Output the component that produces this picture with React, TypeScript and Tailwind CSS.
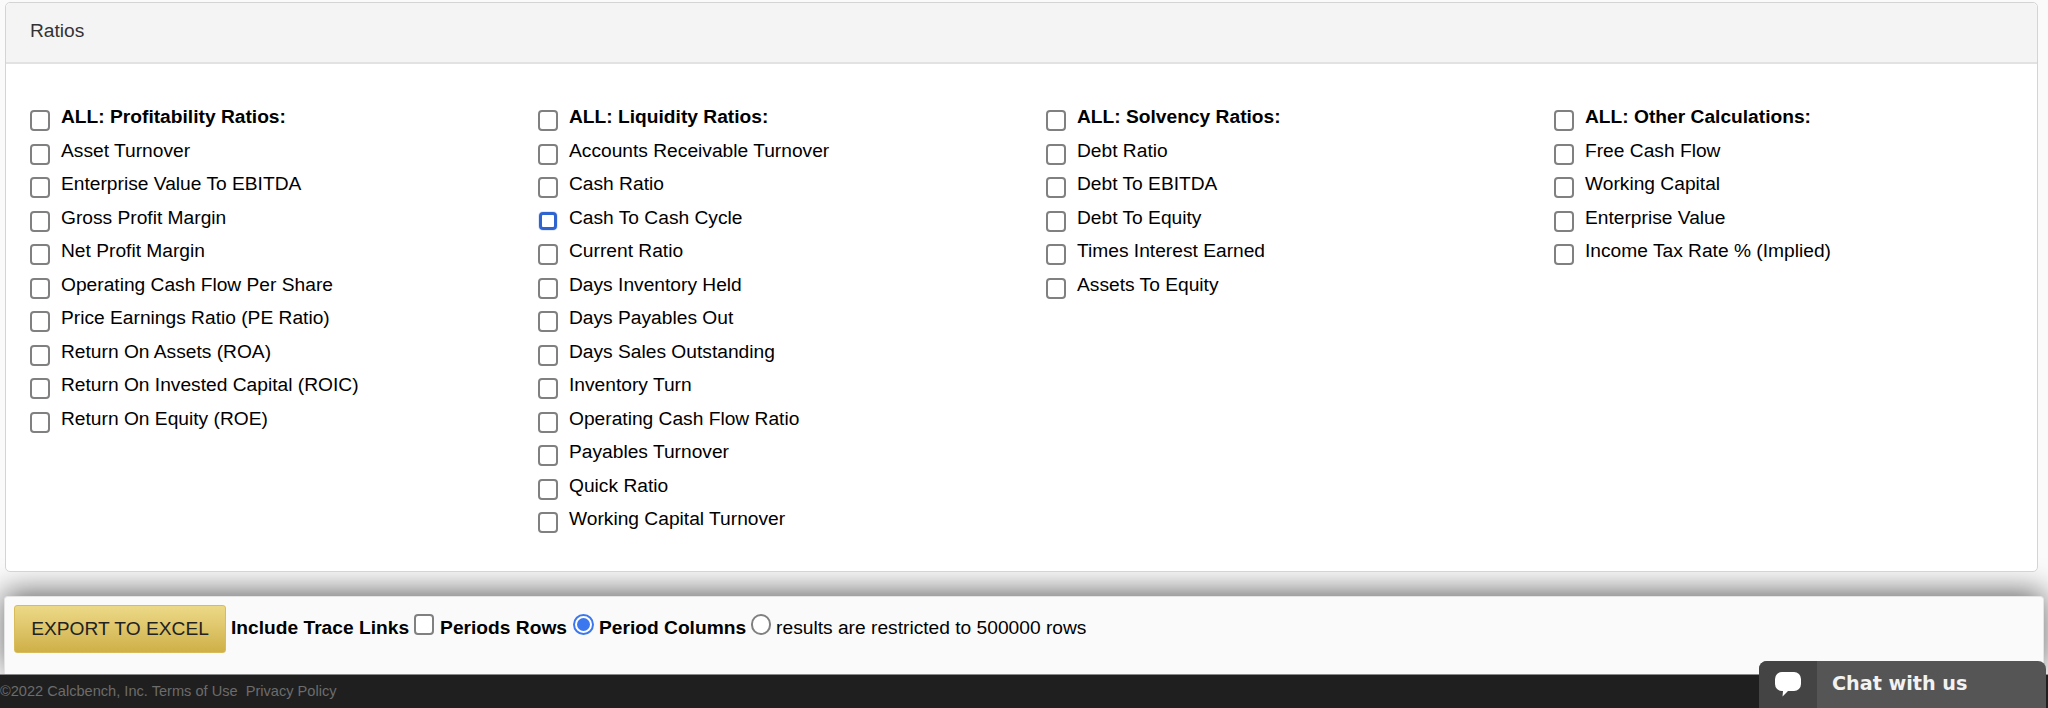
import React from 'react';

const columns = [
  {
    title: 'ALL: Profitability Ratios:',
    items: ['Asset Turnover', 'Enterprise Value To EBITDA', 'Gross Profit Margin', 'Net Profit Margin', 'Operating Cash Flow Per Share', 'Price Earnings Ratio (PE Ratio)', 'Return On Assets (ROA)', 'Return On Invested Capital (ROIC)', 'Return On Equity (ROE)'],
  },
  {
    title: 'ALL: Liquidity Ratios:',
    items: ['Accounts Receivable Turnover', 'Cash Ratio', 'Cash To Cash Cycle', 'Current Ratio', 'Days Inventory Held', 'Days Payables Out', 'Days Sales Outstanding', 'Inventory Turn', 'Operating Cash Flow Ratio', 'Payables Turnover', 'Quick Ratio', 'Working Capital Turnover'],
  },
  {
    title: 'ALL: Solvency Ratios:',
    items: ['Debt Ratio', 'Debt To EBITDA', 'Debt To Equity', 'Times Interest Earned', 'Assets To Equity'],
  },
  {
    title: 'ALL: Other Calculations:',
    items: ['Free Cash Flow', 'Working Capital', 'Enterprise Value', 'Income Tax Rate % (Implied)'],
  },
];

function Row({ label, bold, focused }: { label: string; bold?: boolean; focused?: boolean }) {
  return (
    <label className={`flex h-[33.5px] items-start text-black ${bold ? 'font-bold' : ''}`}>
      {focused ? (
        <span className="mt-[7px] mr-[12px] ml-[1px] h-[18px] w-[18px] shrink-0 rounded-[4px] border-[3px] border-[#2f63cf] bg-white ring-1 ring-[#e3e9f6]" />
      ) : (
        <span className="mt-[6px] mr-[11px] h-[21px] w-[20px] shrink-0 rounded-[4px] border-2 border-[#808080] bg-white" />
      )}
      <span className="leading-[26px]">{label}</span>
    </label>
  );
}

export default function App() {
  return (
    <div className="relative h-[708px] w-[2048px] overflow-hidden bg-[#fafafa] font-['Liberation_Sans',Arial,sans-serif] text-[19.2px]">
      <div className="relative z-10 mt-[2px] mr-[10px] ml-[5px] h-[570px] rounded-[5px] border border-[#d4d4d4] bg-white">
        <div className="flex h-[61px] items-center rounded-t-[5px] border-b-2 border-[#e2e2e2] bg-[#f4f4f4] pb-[3px] pl-[24px] text-[#333]">
          Ratios
        </div>
        <div className="grid grid-cols-[508px_508px_508px_1fr] pt-[40px] pl-[24px]">
          {columns.map((col) => (
            <div key={col.title}>
              <Row label={col.title} bold />
              {col.items.map((item) => (
                <Row key={item} label={item} focused={item === 'Cash To Cash Cycle'} />
              ))}
            </div>
          ))}
        </div>
      </div>

      <div className="mx-[4px] mt-[24px] flex h-[78px] items-start rounded-t-[4px] border border-b-0 border-[#e4e4e4] bg-[#fafafa] pt-[8px] pl-[9px] shadow-[0_-4px_30px_rgba(0,0,0,0.6)]">
        <button className="h-[48px] w-[212px] rounded-[3px] border border-[#d8bc5c] bg-gradient-to-b from-[#ecd987] to-[#cfb047] text-center text-[#222]">
          EXPORT TO EXCEL
        </button>
        <div className="ml-[5px] flex h-[46px] items-center whitespace-nowrap text-black">
          <b>Include Trace Links</b>
          <span className="mr-[6px] mb-[7px] ml-[5px] h-[21px] w-[20px] rounded-[4px] border-2 border-[#808080] bg-white" />
          <b>Periods Rows</b>
          <span className="mr-[5px] mb-[7px] ml-[6px] flex h-[21px] w-[21px] items-center justify-center rounded-full border-2 border-[#3b78f0] bg-white">
            <span className="h-[13px] w-[13px] rounded-full bg-[#3b78f0]" />
          </span>
          <b>Period Columns</b>
          <span className="mx-[5px] mb-[7px] h-[21px] w-[20px] rounded-full border-2 border-[#808080] bg-white" />
          <span>results are restricted to 500000 rows</span>
        </div>
      </div>

      <div className="relative flex h-[34px] items-center border-t border-[#888] bg-[#1f1f1f] text-[14.6px] text-[#6c6c6c]">
        <span className="whitespace-nowrap">©2022 Calcbench, Inc. Terms of Use&nbsp; Privacy Policy</span>
      </div>

      <div className="absolute right-[2px] bottom-0 flex h-[47px] w-[287px] overflow-hidden rounded-t-[8px] bg-[#555] font-['DejaVu_Sans',sans-serif] text-[19.2px] font-bold text-[#f2f2f2]">
        <div className="flex w-[58px] items-center justify-center bg-[#444]">
          <svg width="26" height="26" viewBox="0 0 26 26" fill="#fff">
            <path d="M7 0h12a7 7 0 0 1 7 7v5a7 7 0 0 1-7 7h-6l-5.500 5.500 0.500-5.500H7a7 7 0 0 1-7-7V7a7 7 0 0 1 7-7z" />
          </svg>
        </div>
        <div className="flex flex-1 items-center pl-[15px]">Chat with us</div>
      </div>
    </div>
  );
}
